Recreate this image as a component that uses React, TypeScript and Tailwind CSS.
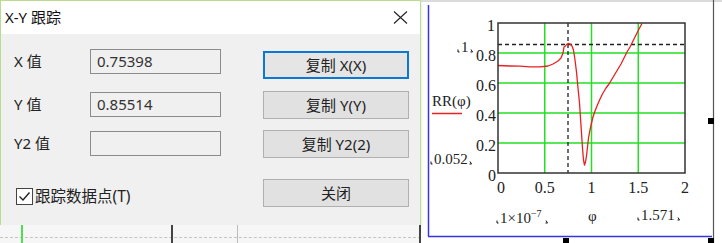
import React from 'react';

const uiFont = "font-['Noto_Sans','Noto_Sans_CJK_SC',sans-serif]";

// plot box in page coordinates
const X0 = 498;
const X1 = 685;
const Y0 = 173;
const Y1 = 23;
const px = (v: number) => X0 + ((X1 - X0) * v) / 2;
const py = (v: number) => Y0 - (Y0 - Y1) * v;

const curve: [number, number][] = [
  [498, 65.5], [510, 66], [520, 66.2], [530, 66.8], [540, 66.8], [548, 66], [553, 64],
  [558, 61], [561, 58], [563, 53], [564, 47], [565.5, 46], [566.5, 44.5], [568, 43.5],
  [570, 44], [572, 46], [573.5, 50], [575, 60], [576.5, 72], [578, 88], [579.5, 103],
  [580.5, 118], [581.5, 133], [582.5, 148], [583.5, 160], [584.5, 165], [585.5, 162],
  [586.5, 156], [587.5, 147], [588.5, 138], [590, 130], [591.5, 123], [593, 117],
  [595, 111], [597, 106], [600, 99], [603, 93], [606, 88], [609, 84], [612, 79],
  [615, 74], [618, 69], [621, 64], [624, 58], [627, 52], [630, 47], [633, 41],
  [636, 35], [639, 29], [642, 23.5],
];

const Corner = ({ x, y, right }: { x: number; y: number; right?: boolean }) => (
  <path
    d={right ? `M${x} ${y - 2.5} L${x + 1.5} ${y} L${x - 0.5} ${y}` : `M${x} ${y - 2.5} L${x} ${y} L${x + 1.5} ${y}`}
    stroke="#111"
    strokeWidth={1}
    fill="none"
  />
);

function Chart() {
  const ys = [0.2, 0.4, 0.6, 0.8];
  const xs = [0.5, 1, 1.5];
  return (
    <svg width={301} height={243} viewBox="421 0 301 243" className="block">
      <line x1={421} y1={1} x2={722} y2={1} stroke="#cfcfcf" strokeWidth={1.5} />
      <line x1={428.5} y1={5} x2={428.5} y2={236} stroke="#3535e0" strokeWidth={1.5} />
      <line x1={428} y1={236.5} x2={712} y2={236.5} stroke="#3535e0" strokeWidth={1.5} />
      <line x1={713.5} y1={0} x2={713.5} y2={243} stroke="#555" strokeWidth={1.2} />
      <rect x={708} y={118} width={6} height={6} fill="#000" />
      <rect x={563} y={238} width={6} height={6} fill="#000" />
      <rect x={708} y={238} width={6} height={6} fill="#000" />

      {ys.map((v) => (
        <line key={v} x1={X0} y1={py(v)} x2={X1} y2={py(v)} stroke="#22e022" strokeWidth={1.5} />
      ))}
      {xs.map((v) => (
        <line key={v} x1={px(v)} y1={Y1} x2={px(v)} y2={Y0} stroke="#22e022" strokeWidth={1.5} />
      ))}
      <line x1={X0} y1={44.5} x2={X1} y2={44.5} stroke="#222" strokeWidth={1.3} strokeDasharray="4 3" />
      <line x1={568} y1={Y1} x2={568} y2={Y0} stroke="#222" strokeWidth={1.3} strokeDasharray="4 3" />
      <polyline
        points={curve.map((p) => p.join(',')).join(' ')}
        fill="none"
        stroke="#e82020"
        strokeWidth={1.3}
        strokeLinejoin="round"
      />
      <rect x={X0} y={Y1} width={X1 - X0} height={Y0 - Y1} fill="none" stroke="#333" strokeWidth={1.5} />

      <g fontFamily="'Liberation Serif', serif" fontSize={16} fill="#222">
        <text x={495} y={31} textAnchor="end">1</text>
        {ys.map((v) => (
          <text key={v} x={496} y={py(v) + 8} textAnchor="end">
            {v.toFixed(1)}
          </text>
        ))}
        <text x={496} y={181} textAnchor="end">0</text>
        {[0, 0.5, 1, 1.5, 2].map((v) => (
          <text key={v} x={v === 0 ? 501 : px(v)} y={193} textAnchor="middle">
            {v}
          </text>
        ))}
        <text x={432} y={106} fontSize={15}>RR(φ)</text>
        <text x={588} y={221} fontSize={15}>φ</text>
      </g>
      <line x1={432} y1={113.5} x2={462} y2={113.5} stroke="#e82020" strokeWidth={1.5} />

      <g fontFamily="'Liberation Serif', serif" fontSize={15} fill="#222">
        <text x={461} y={52}>1</text>
        <text x={434} y={164}>0.052</text>
        <text x={500} y={223}>
          1×10<tspan dy={-6} fontSize={10}>−7</tspan>
        </text>
        <text x={641} y={220}>1.571</text>
      </g>
      <Corner x={458} y={52} />
      <Corner x={471} y={52} right />
      <Corner x={431} y={164} />
      <Corner x={470} y={164} right />
      <Corner x={497} y={223} />
      <Corner x={546} y={223} right />
      <Corner x={638} y={220} />
      <Corner x={678} y={220} right />
    </svg>
  );
}

function ValueRow({ label, value, className }: { label: string; value: string; className: string }) {
  return (
    <div className={`flex items-center h-[25px] ${className}`}>
      <span className="w-[76px] text-[15px] text-[#222]">{label}</span>
      <div className="w-[131px] h-[25px] border border-[#8c8c8c] bg-[#f0f0f0] flex items-center pl-[6px] text-[15px] text-[#333]">
        {value}
      </div>
    </div>
  );
}

function Btn({ children, focused, className }: { children: React.ReactNode; focused?: boolean; className: string }) {
  return (
    <button
      className={`w-[146px] h-[28px] flex items-center justify-center text-[15px] text-[#222] ${
        focused ? 'border-2 border-[#0a78d4] bg-[#e5e5e5]' : 'border border-[#b0b0b0] bg-[#e1e1e1]'
      } ${className}`}
    >
      {children}
    </button>
  );
}

export default function App() {
  return (
    <div className={`w-[722px] h-[243px] flex bg-white overflow-hidden ${uiFont}`}>
      <div className="w-[421px] flex flex-col">
        <div className="h-[225px] flex flex-col border-l border-r border-t border-[#b9dc8f] shadow-[0_2px_4px_rgba(0,0,0,0.12)]">
          <div className="h-[33px] bg-white flex items-center justify-between pl-[4px] pr-[12px]">
            <span className="text-[15px] text-[#111]">X-Y 跟踪</span>
            <svg width={15} height={13} viewBox="0 0 15 13">
              <path d="M1 0.5 L14 12.5 M14 0.5 L1 12.5" stroke="#222" strokeWidth={1.1} />
            </svg>
          </div>
          <div className="flex-1 bg-[#f0f0f0] flex">
            <div className="w-[262px] pl-[13px] pt-[15px] flex flex-col">
              <ValueRow label="X 值" value="0.75398" className="" />
              <ValueRow label="Y 值" value="0.85514" className="mt-[18px]" />
              <ValueRow label="Y2 值" value="" className="mt-[14px]" />
              <div className="mt-[32px] flex items-center h-[17px] pl-[2px] gap-[2px]">
                <div className="w-[17px] h-[17px] border border-[#444] bg-white flex items-center justify-center">
                  <svg width={13} height={11} viewBox="0 0 13 11">
                    <path d="M1.5 5.5 L5 9 L11.5 1.5" stroke="#222" strokeWidth={1.4} fill="none" />
                  </svg>
                </div>
                <span className="text-[15.5px] text-[#222]">跟踪数据点(T)</span>
              </div>
            </div>
            <div className="pt-[17px] flex flex-col">
              <Btn focused className="">复制 X(X)</Btn>
              <Btn className="mt-[12px]">复制 Y(Y)</Btn>
              <Btn className="mt-[11px]">复制 Y2(2)</Btn>
              <Btn className="mt-[21px]">关闭</Btn>
            </div>
          </div>
        </div>
        <div className="flex-1 relative bg-[#f6f6f6]">
          <div className="absolute left-0 right-0 top-[12px] border-t border-dashed border-[#c4c4c4]" />
          <div className="absolute left-[21px] top-0 bottom-0 w-[2px] bg-[#4fe04f]" />
          <div className="absolute left-[171px] top-0 bottom-0 w-[2px] bg-[#444]" />
          <div className="absolute left-[237px] top-0 bottom-0 w-px bg-[#bbb]" />
          <div className="absolute left-[419px] top-0 bottom-0 w-[2px] bg-[#444]" />
        </div>
      </div>
      <div className="flex-1">
        <Chart />
      </div>
    </div>
  );
}
